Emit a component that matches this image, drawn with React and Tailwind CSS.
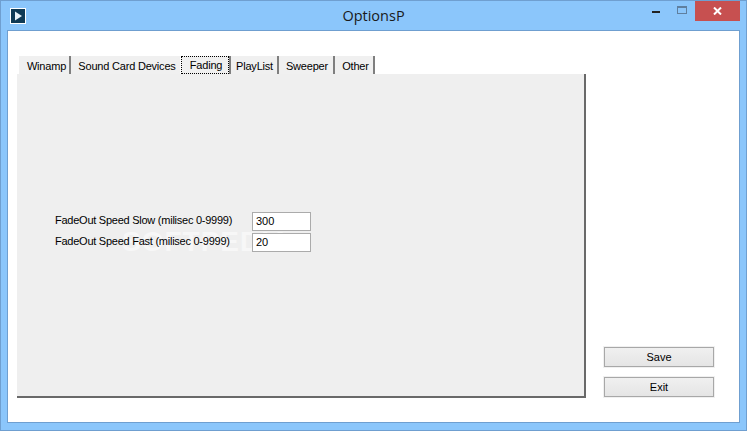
import React from 'react';

const tabs = [
    { label: 'Winamp', width: 'w-[52px]', edge: 'border-r-2 border-[#7f7f7f]', pad: 'pl-[5px]' },
    { label: 'Sound Card Devices', width: 'w-[110px]', edge: 'border-r border-white', pad: 'pl-[3px]' },
    { label: 'Fading', width: 'w-[50px]', edge: 'border-r-2 border-[#7f7f7f]', active: true },
    { label: 'PlayList', width: 'w-[48px]', edge: 'border-r-2 border-[#7f7f7f]', pad: 'pl-[1px]' },
    { label: 'Sweeper', width: 'w-[56px]', edge: 'border-r-2 border-[#7f7f7f]', pad: 'pl-[2px]' },
    { label: 'Other', width: 'w-[40px]', edge: 'border-r-2 border-[#7f7f7f]', pad: 'pl-[3px]' },
];

const AppIcon = () => (
    <svg width="16" height="16" viewBox="0 0 16 16" className="block">
        <rect x="0.5" y="0.5" width="15" height="15" fill="#0f3a55" stroke="#ffffff" />
        <path d="M5 3.5 L12 8 L5 12.5 Z" fill="#e8f2f8" />
    </svg>
);

const TitleBar = () => (
    <div className="relative flex h-[29px] shrink-0 items-center justify-between pl-[9px] pr-[6px]">
        <AppIcon />
        <span className="absolute left-0 right-0 top-[5px] text-center text-[14.5px] leading-[20px] text-[#1a1a1a] font-['Open_Sans',sans-serif]">
            OptionsP
        </span>
        <div className="flex h-[20px] items-start self-start">
            <div className="flex h-[20px] w-[26px] items-center justify-center pt-[2px]">
                <div className="h-[2px] w-[8px] bg-[#222222]" />
            </div>
            <div className="flex h-[20px] w-[26px] items-center justify-center pb-[2px]">
                <div className="h-[8px] w-[10px] border border-t-2 border-[#5f7f9f]" />
            </div>
            <div className="flex h-[20px] w-[45px] items-center justify-center bg-[#c75050]">
                <svg width="9" height="8" viewBox="0 0 9 8">
                    <path d="M1 0.5 L8 7.5 M8 0.5 L1 7.5" stroke="#ffffff" strokeWidth="2" fill="none" />
                </svg>
            </div>
        </div>
    </div>
);

const TabStrip = () => (
    <div className="flex h-[18px] items-stretch pl-[2px]">
        {tabs.map((tab) => (
            <div
                key={tab.label}
                className={`${tab.width} ${tab.edge} flex shrink-0 items-center justify-center whitespace-nowrap bg-[#f0f0f0] text-[11px] tracking-[-0.2px] text-black`}
            >
                {tab.active ? (
                    <span className="-mt-px flex h-[18px] w-full items-center justify-center border border-dotted border-black pt-px pl-[2px]">
                        {tab.label}
                    </span>
                ) : (
                    <span className={`${tab.pad} pt-[2px]`}>{tab.label}</span>
                )}
            </div>
        ))}
    </div>
);

const SpeedRow = ({ label, value }) => (
    <div className="relative flex h-[21px] items-center">
        <span className="w-[197px] shrink-0 whitespace-nowrap pb-[3px] text-[11px] leading-[14px] tracking-[-0.25px] text-black">
            {label}
        </span>
        <div className="flex h-[19px] w-[59px] items-center border border-[#ababab] bg-white pl-[3px] text-[11px] text-black">
            {value}
        </div>
    </div>
);

const ActionButton = ({ children }) => (
    <button className="flex h-[20px] w-[110px] items-center justify-center border border-[#a8a8a8] bg-linear-to-b from-[#f0f0f0] to-[#e5e5e5] text-[11px] text-black outline outline-1 outline-[#f0f0f0]">
        {children}
    </button>
);

export default function App() {
    return (
        <div className="flex h-[431px] w-[747px] flex-col overflow-hidden border border-[#6f9fd0] bg-[#8bc6fb] font-['Liberation_Sans',sans-serif]">
            <TitleBar />
            <div className="mx-[6px] mb-[7px] flex flex-1 border border-[#6f9fd0] bg-white">
                <div className="flex flex-col pt-[25px] pl-[9px]">
                    <TabStrip />
                    <div className="relative flex h-[324px] w-[569px] flex-col justify-start border-r-2 border-b-2 border-[#696969] bg-[#efefef] pl-[38px] pt-[137px]">
                        <span className="absolute left-[105px] top-[147px] text-[28px] font-bold tracking-[1px] text-[#f7f7f7]">
                            SOFTPEDIA
                        </span>
                        <SpeedRow label="FadeOut Speed Slow (milisec 0-9999)" value="300" />
                        <SpeedRow label="FadeOut Speed Fast (milisec 0-9999)" value="20" />
                    </div>
                </div>
                <div className="flex flex-1 flex-col items-start justify-end gap-[10px] pb-[25px] pl-[18px]">
                    <ActionButton>Save</ActionButton>
                    <ActionButton>Exit</ActionButton>
                </div>
            </div>
        </div>
    );
}
